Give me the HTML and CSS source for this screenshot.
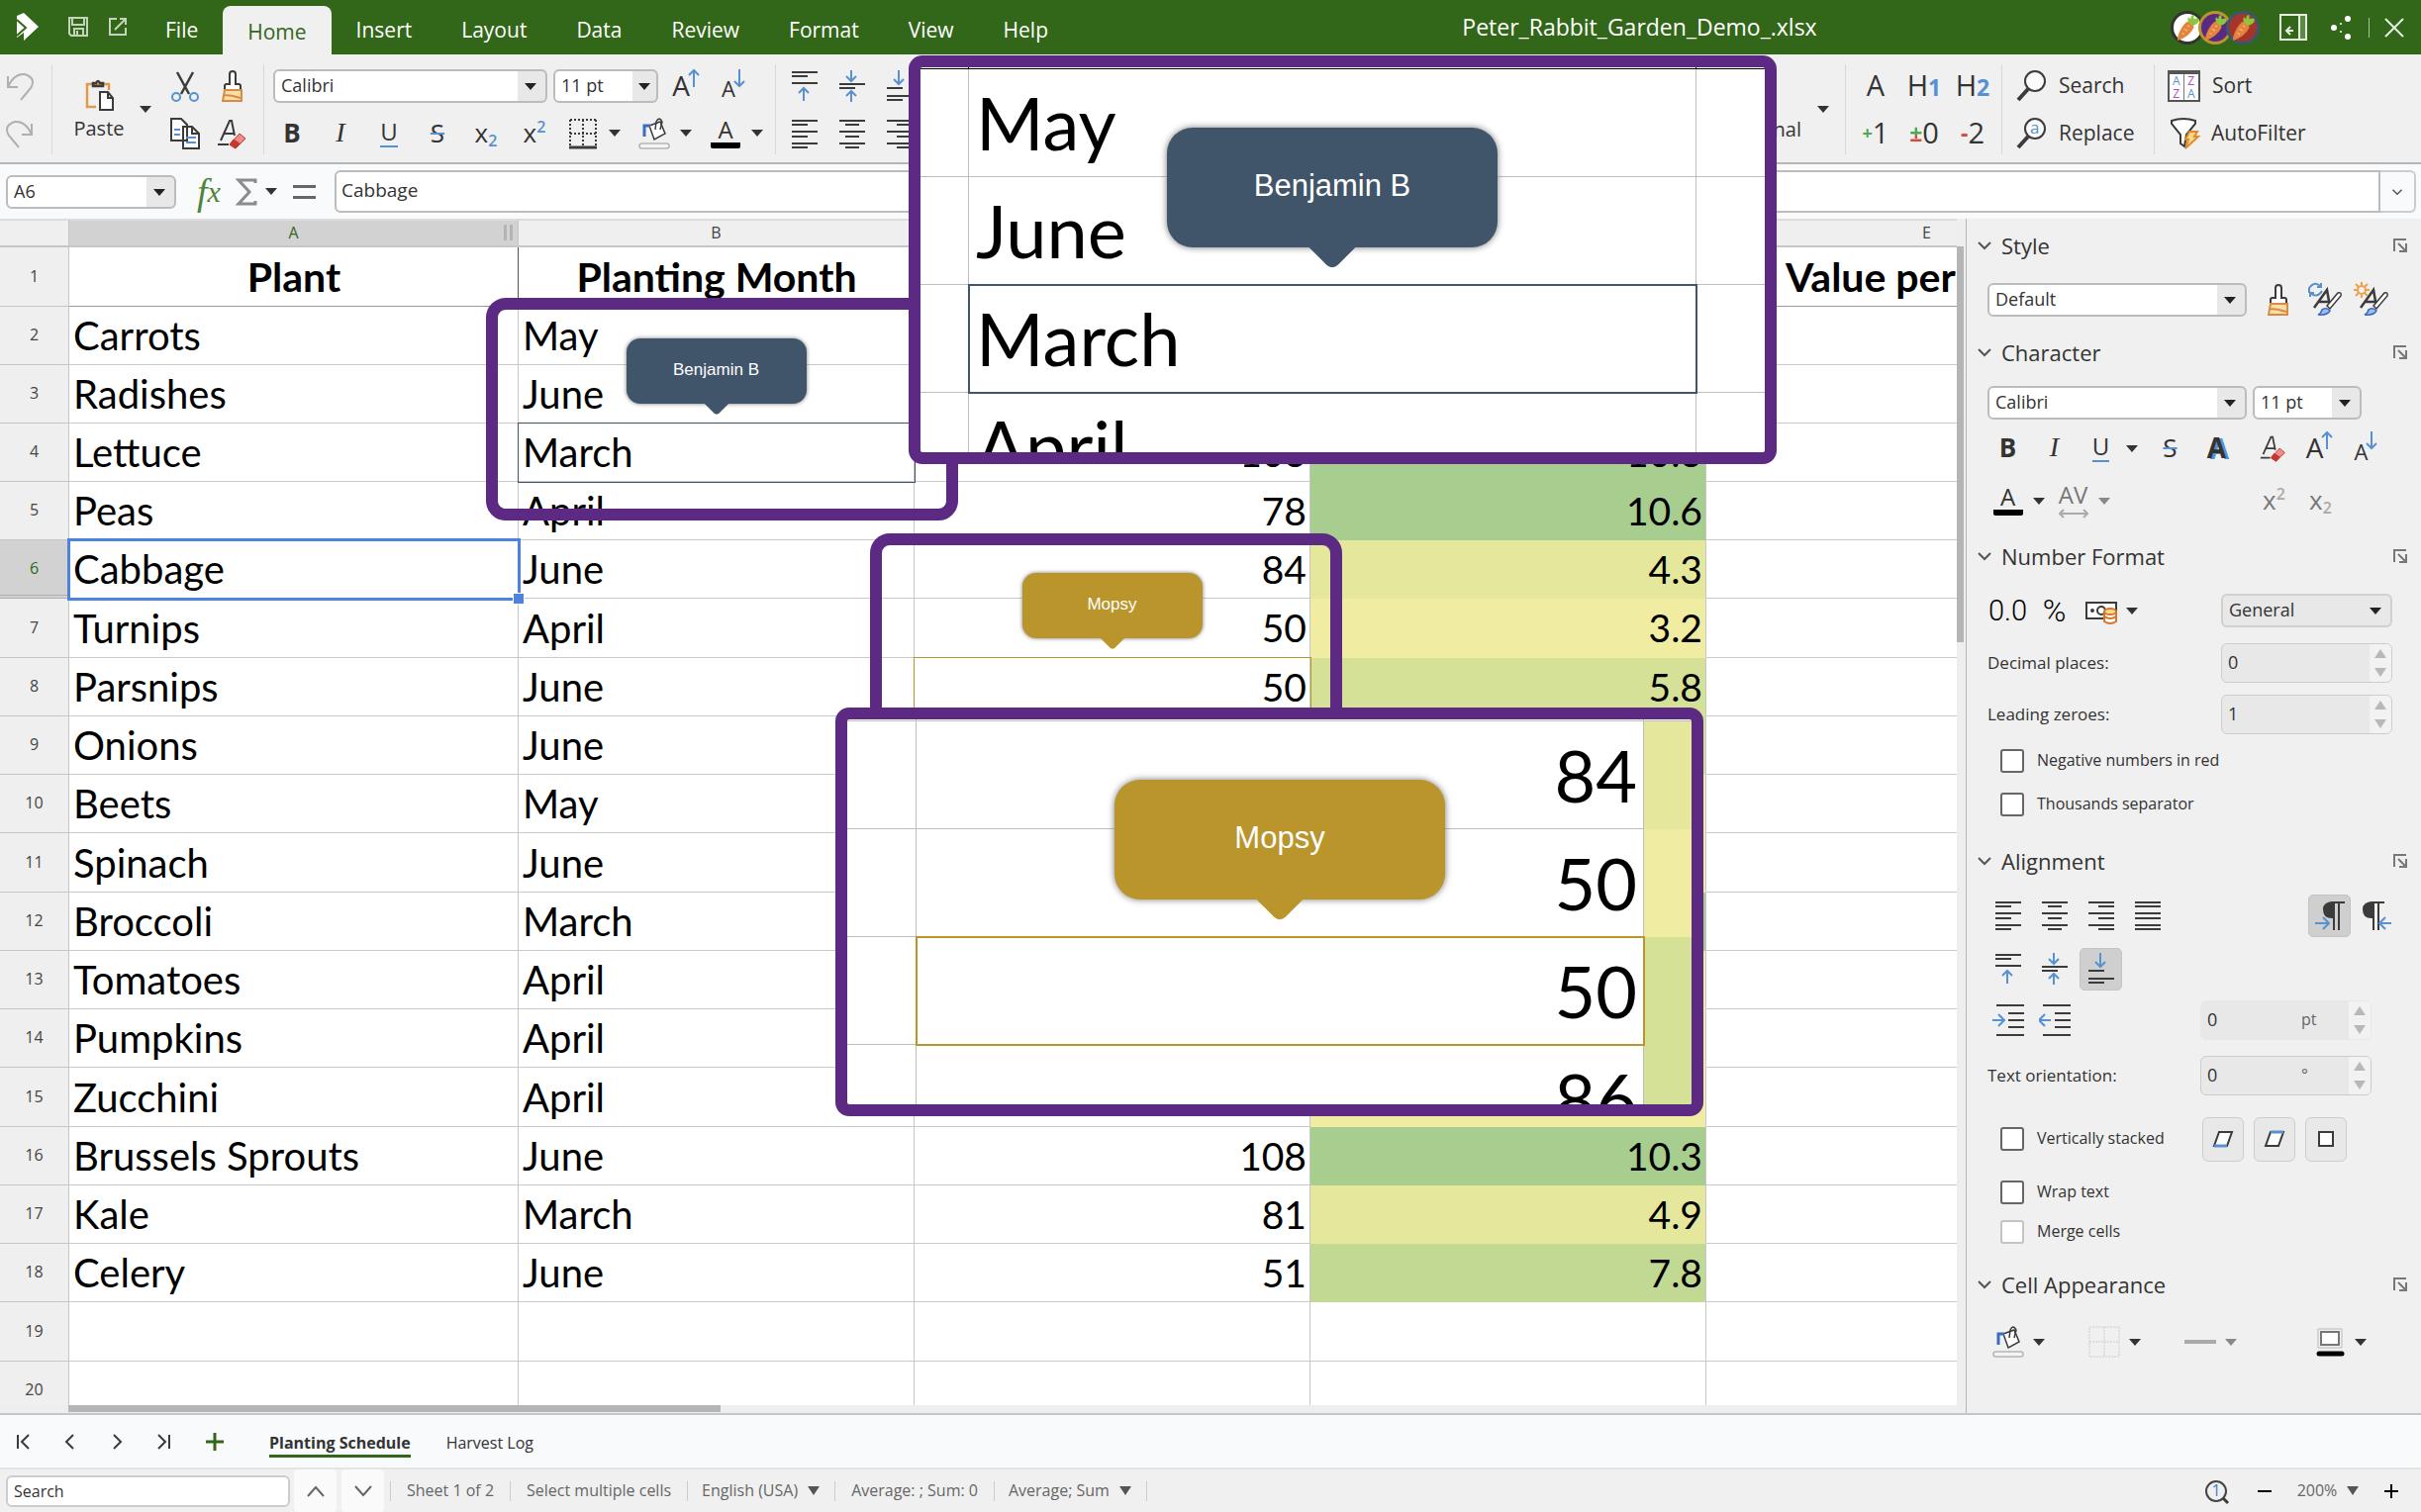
FILE: index.html
```html
<!DOCTYPE html>
<html lang="en">
<head>
<meta charset="utf-8">
<title>Peter_Rabbit_Garden_Demo_.xlsx</title>
<link rel="stylesheet" href="styles.css">
</head>
<body>
<svg class="sprite" aria-hidden="true">
  <symbol id="left" viewBox="0 0 32 32"><path d="M3 3h26M3 14h26M3 26h26M3 7h16M3 19h16M3 30h16"/></symbol>
  <symbol id="center" viewBox="0 0 32 32"><path d="M3 3h26M3 14h26M3 26h26M9 7h14M9 19h14M9 30h14"/></symbol>
  <symbol id="right" viewBox="0 0 32 32"><path d="M3 3h26M3 14h26M3 26h26M13 7h16M13 19h16M13 30h16"/></symbol>
  <symbol id="justify" viewBox="0 0 32 32"><path d="M3 3h26M3 14h26M3 26h26M3 7h26M3 19h26M3 30h26"/></symbol>
  <symbol id="vtop" viewBox="0 0 32 32"><path d="M3 2h26M3 6h16M3 13h26"/><path class="blue" d="M15 31V18M10 23l5-5 5 5"/></symbol>
  <symbol id="vmid" viewBox="0 0 32 32"><path d="M3 14h26M3 18h16"/><path class="blue" d="M15 0v11M10 6l5 5 5-5M15 32V21M10 26l5-5 5 5"/></symbol>
  <symbol id="vbot" viewBox="0 0 32 32"><path d="M3 18h16M3 26h26M3 30h16"/><path class="blue" d="M15 0v14M10 9l5 5 5-5"/></symbol>
  <symbol id="indent" viewBox="0 0 32 32"><path d="M4 1h28M16 9h16M16 16h16M16 23h16M4 31h28"/><path class="blue" d="M0 16h12M6 10l6 6-6 6"/></symbol>
  <symbol id="outdent" viewBox="0 0 32 32"><path d="M4 1h28M16 9h16M16 16h16M16 23h16M4 31h28"/><path class="blue" d="M0 16h12M6 10l-6 6 6 6"/></symbol>
  <symbol id="brush" viewBox="0 0 32 32"><path fill="#fff" d="M8 20v-4q0-2 2-2h3V4q0-3 3-3t3 3v10h3q2 0 2 2v4z"/><path fill="#f6dfa4" stroke="#d98b45" d="M8 20h17v11H6zM7 25q8 0 17 3"/></symbol>
  <symbol id="eraser" viewBox="0 0 32 32"><path d="M4 23L13 3h2l3 15M8 16h9" stroke-width="2"/><path d="M1 27h11"/><path fill="#e98d8d" stroke="#c8372d" stroke-width="1" d="M13 27l10-11 6 5-10 10z"/><path fill="#c8372d" stroke="#c8372d" stroke-width="1" d="M13 27l4-5 6 4-4 5z"/></symbol>
  <symbol id="bucket" viewBox="0 0 32 32"><path fill="#fff" stroke-width="1.500" d="M11 8l11-4 5 12-11 6z"/><path stroke-width="1.500" d="M17 12l1-8q3-6 6 0l-2 8"/><path stroke="#3c6cc0" stroke-width="3" d="M6 19V8h6"/><rect x="1" y="26" width="30" height="5" rx="2.500" fill="#f4f4f4" stroke="#b5b5b5" stroke-width="1.500"/></symbol>
  <symbol id="launch" viewBox="0 0 16 16"><path stroke="#777" d="M2 14V2h12M14 6v8H7M6 6l8 8"/></symbol>
  <symbol id="chev" viewBox="0 0 16 16"><path stroke="#555" d="M2 5l6 6 6-6"/></symbol>
  <symbol id="lens" viewBox="0 0 32 32"><circle cx="20" cy="11" r="10" fill="#fcfcfc"/><path d="M13 19L3 30" stroke-width="4"/></symbol>
  <symbol id="carrot" viewBox="0 0 24 24"><path fill="#e4833c" stroke="none" d="M13 6q5 1 5 6-4 8-15 12-1-2 2-9 4-8 8-9z"/><path stroke="#f7c08c" stroke-width="1" d="M9 13l3 2M7 17l2 1M12 10l2 1"/><path fill="#8cc63a" stroke="none" d="M15 9q-4-4-2-7l2 2q0-4 3-4v4q5-2 5 1-1 4-7 5z"/></symbol>
  <symbol id="newA" viewBox="0 0 36 36"><path d="M7 26L20 8l3 17M11 20h11" stroke-width="2.500"/><path fill="#fff" stroke-width="1.500" d="M20 24L31 11q4-1 3 3L23 27z"/><path fill="#9fc0ee" stroke="#3c6cc0" stroke-width="1.500" d="M11 33q3-1 4-5 5-3 8 1-3 5-12 4z"/></symbol>
</svg>

<div class="app">
  <header class="titlebar">
    <svg class="logo" viewBox="0 0 22 28" aria-label="Logo"><path fill="#fff" d="M7 0l15 14L7 28V20L0 25V3z"/><path fill="none" stroke="#326618" stroke-width="2" d="M0 7l9 8-9 8"/></svg>
    <button class="tb" aria-label="Save"><svg class="i20 pale thin" viewBox="0 0 20 20"><path d="M1 1h18v18H3l-2-2zM4 1v7h12V1M6 19v-7h9v7M9 14v5"/></svg></button>
    <button class="tb" aria-label="Open in new window"><svg class="i20 pale thin" viewBox="0 0 20 20"><path d="M9 2H2v16h16v-7M12 2h6v6M18 2L7 13"/></svg></button>
    <nav class="tabs">
      <a href="#">File</a><a href="#" class="on">Home</a><a href="#">Insert</a><a href="#">Layout</a><a href="#">Data</a><a href="#">Review</a><a href="#">Format</a><a href="#">View</a><a href="#">Help</a>
    </nav>
    <h1 class="filename">Peter_Rabbit_Garden_Demo_.xlsx</h1>
    <div class="tools">
      <div class="people"><span class="av a1"><svg><use href="#carrot"/></svg></span><span class="av a2"><svg><use href="#carrot"/></svg></span><span class="av a3"><svg><use href="#carrot"/></svg></span></div>
      <button class="tb" aria-label="Sidebar"><svg class="i28 pale" viewBox="0 0 28 28"><path d="M1 1h26v25H1zM20 1v25M14 17H8M11 13l-4 4 4 4"/><path fill="#5c8a45" d="M20 1h7v25h-7z"/></svg></button>
      <button class="tb" aria-label="Share"><svg class="i20 dots" viewBox="0 0 20 24"><circle cx="3" cy="12" r="3"/><circle cx="17" cy="3" r="3"/><circle cx="17" cy="21" r="3"/><circle cx="10" cy="8" r="1"/><circle cx="10" cy="16" r="1"/></svg></button>
      <i class="tsep"></i>
      <button class="tb" aria-label="Close"><svg class="i20 pale" viewBox="0 0 20 20"><path d="M1 1l18 18M19 1L1 19"/></svg></button>
    </div>
  </header>

  <section class="ribbon" aria-label="Home tools">
    <div class="group g-undo">
      <button class="ib" aria-label="Undo"><svg class="i28 faint" viewBox="0 0 28 28"><path d="M2 4v11h10M2 15Q8 1 19 2q12 4 6 14l-10 12"/></svg></button>
      <button class="ib" aria-label="Redo"><svg class="i28 faint" viewBox="0 0 28 28"><path d="M26 4v11H16M26 15Q20 1 9 2q-12 4-6 14l10 12"/></svg></button>
    </div>
    <div class="group g-clip">
      <button class="paste"><svg class="i32" viewBox="0 0 32 32"><path stroke="#e09a4a" d="M13 28H4V5h22v6" stroke-width="2.500"/><path d="M10 7V4h3q2-4 4 0h3v3z" stroke-width="2.500"/><path fill="#fff" d="M17 13h8l5 6v12H17zM25 13v6h5"/></svg><span>Paste</span></button>
      <span class="arr"></span>
      <div class="pad2">
        <button class="ib" aria-label="Cut"><svg class="i32" viewBox="0 0 32 32"><path d="M8 2l12 22M24 2L12 24" stroke-width="2.500"/><g class="blue"><circle cx="7" cy="27" r="4"/><circle cx="25" cy="27" r="4"/></g></svg></button>
        <button class="ib" aria-label="Format painter"><svg class="i32"><use href="#brush"/></svg></button>
        <button class="ib" aria-label="Copy"><svg class="i32" viewBox="0 0 32 32"><path fill="#fff" d="M2 1h10l6 6v16H2zM14 9h9l7 7v15H14zM23 9v7h7"/><path class="blue" d="M5 12h6M5 17h6M17 20h10M17 25h10"/></svg></button>
        <button class="ib" aria-label="Clear formatting"><svg class="i32"><use href="#eraser"/></svg></button>
      </div>
    </div>
    <div class="group g-font">
      <div class="line">
        <span class="combo fam"><select aria-label="Font"><option>Calibri</option></select></span>
        <span class="combo siz"><select aria-label="Font size"><option>11 pt</option></select></span>
        <button class="ib grow" aria-label="Increase size"><span class="lt">A</span><svg class="ar" viewBox="0 0 12 18"><path class="blue" d="M6 18V1M1 6l5-5 5 5"/></svg></button>
        <button class="ib grow small" aria-label="Decrease size"><span class="lt">A</span><svg class="ar" viewBox="0 0 12 18"><path class="blue" d="M6 0v17M1 12l5 5 5-5"/></svg></button>
      </div>
      <div class="line">
        <div class="chars"><button class="ib ch"><b>B</b></button><button class="ib ch"><i class="ser">I</i></button><button class="ib ch"><span class="un">U</span></button><button class="ib ch"><span class="st">S</span></button><button class="ib ch"><span>x<sub>2</sub></span></button><button class="ib ch"><span>x<sup>2</sup></span></button></div>
        <div class="splits">
          <div><button class="ib" aria-label="Borders"><svg class="i32" viewBox="0 0 32 32"><path d="M3 2h26M3 2v26M29 2v26M16 2v26M3 16h26" stroke-dasharray="2 2"/><path d="M2 30h28" stroke-width="3"/></svg></button><span class="arr"></span></div>
          <div><button class="ib" aria-label="Fill colour"><svg class="i32"><use href="#bucket"/></svg></button><span class="arr"></span></div>
          <div><button class="ib ch"><span class="bar">A</span></button><span class="arr"></span></div>
        </div>
      </div>
    </div>
    <div class="group g-align">
      <div class="pad3">
        <button class="ib" aria-label="Top"><svg class="i32"><use href="#vtop"/></svg></button><button class="ib" aria-label="Middle"><svg class="i32"><use href="#vmid"/></svg></button><button class="ib" aria-label="Bottom"><svg class="i32"><use href="#vbot"/></svg></button>
        <button class="ib" aria-label="Left"><svg class="i32"><use href="#left"/></svg></button><button class="ib" aria-label="Centre"><svg class="i32"><use href="#center"/></svg></button><button class="ib" aria-label="Right"><svg class="i32"><use href="#right"/></svg></button>
      </div>
      <button class="cond">Conditional</button><span class="arr"></span>
    </div>
    <div class="group g-style">
      <div class="pad3">
        <button class="ib big">A</button><button class="ib big">H<b class="b">1</b></button><button class="ib big">H<b class="b">2</b></button>
        <button class="ib big"><b class="g">+</b>1</button><button class="ib big"><b class="pm">±</b>0</button><button class="ib big"><b class="r">-</b>2</button>
      </div>
    </div>
    <div class="group g-find">
      <button class="wide"><svg class="i32"><use href="#lens"/></svg>Search</button>
      <button class="wide"><span class="rep"><svg class="i32"><use href="#lens"/></svg><em>a</em></span>Replace</button>
    </div>
    <div class="group g-sort">
      <button class="wide"><span class="az"><span>A</span><span>Z</span><span>Z</span><span>A</span></span>Sort</button>
      <button class="wide"><svg class="i32" viewBox="0 0 32 32"><path fill="#fff" d="M4 3q12-4 24 0v3L19 17l-2 12-4-3V17L4 6z"/><path fill="#f8d98a" stroke="#e08a2e" d="M22 14h8l-3 5h4L18 31l3-9h-3z"/></svg>AutoFilter</button>
    </div>
  </section>

  <section class="formula" aria-label="Formula bar">
    <span class="combo name"><select aria-label="Name box"><option>A6</option></select></span>
    <button class="fx">f<sub>x</sub></button>
    <button class="sum" aria-label="Sum"><svg class="i32" viewBox="0 0 32 32"><path stroke="#8b8b8b" stroke-width="3" d="M24 7V4H7l11 12L7 28h17v-3"/></svg></button><span class="arr"></span>
    <button class="eq" aria-label="Equals"><i></i><i></i></button>
    <input class="finput" aria-label="Formula" value="Cabbage">
    <button class="fdrop" aria-label="Expand"><svg class="i12"><use href="#chev"/></svg></button>
  </section>

  <main class="work">
    <div class="grid">
      <div class="view">
        <table>
          <colgroup><col class="c0"><col class="ca"><col class="cb"><col class="cb"><col class="cb"><col class="ce"></colgroup>
          <thead><tr><th></th><th class="cur">A<i class="grip"></i></th><th>B</th><th>C</th><th>D</th><th>E</th></tr></thead>
          <tbody>
            <tr class="head"><th>1</th><td>Plant</td><td>Planting Month</td><td></td><td></td><td class="cut">Value per</td></tr>
            <tr><th>2</th><td>Carrots</td><td>May</td><td></td><td></td><td></td></tr>
            <tr><th>3</th><td>Radishes</td><td>June</td><td></td><td></td><td></td></tr>
            <tr><th>4</th><td>Lettuce</td><td class="peer slate">March<span class="tip">Benjamin B</span></td><td>103</td><td class="s1">10.3</td><td></td></tr>
            <tr><th>5</th><td>Peas</td><td>April</td><td>78</td><td class="s1">10.6</td><td></td></tr>
            <tr class="now"><th>6</th><td class="sel">Cabbage</td><td>June</td><td>84</td><td class="s4">4.3</td><td></td></tr>
            <tr><th>7</th><td>Turnips</td><td>April</td><td>50</td><td class="s5">3.2</td><td></td></tr>
            <tr><th>8</th><td>Parsnips</td><td>June</td><td class="peer gold">50<span class="tip">Mopsy</span></td><td class="s3">5.8</td><td></td></tr>
            <tr><th>9</th><td>Onions</td><td>June</td><td></td><td class="s3"></td><td></td></tr>
            <tr><th>10</th><td>Beets</td><td>May</td><td></td><td class="s5"></td><td></td></tr>
            <tr><th>11</th><td>Spinach</td><td>June</td><td></td><td class="s5"></td><td></td></tr>
            <tr><th>12</th><td>Broccoli</td><td>March</td><td></td><td class="s1"></td><td></td></tr>
            <tr><th>13</th><td>Tomatoes</td><td>April</td><td></td><td class="s5"></td><td></td></tr>
            <tr><th>14</th><td>Pumpkins</td><td>April</td><td></td><td class="s5"></td><td></td></tr>
            <tr><th>15</th><td>Zucchini</td><td>April</td><td></td><td class="s5"></td><td></td></tr>
            <tr><th>16</th><td>Brussels Sprouts</td><td>June</td><td>108</td><td class="s1">10.3</td><td></td></tr>
            <tr><th>17</th><td>Kale</td><td>March</td><td>81</td><td class="s4">4.9</td><td></td></tr>
            <tr><th>18</th><td>Celery</td><td>June</td><td>51</td><td class="s2">7.8</td><td></td></tr>
            <tr><th>19</th><td></td><td></td><td></td><td></td><td></td></tr>
            <tr><th>20</th><td></td><td></td><td></td><td></td><td></td></tr>
          </tbody>
        </table>
      </div>
      <div class="vbar"><i></i></div>
      <div class="hbar"><i></i></div>
    </div>

    <aside class="side" aria-label="Properties">
      <h2><svg class="i16"><use href="#chev"/></svg>Style<svg class="i16 lau"><use href="#launch"/></svg></h2>
      <div class="row h52 inset">
        <span class="combo sfam"><select aria-label="Style"><option>Default</option></select></span>
        <button class="sb first" aria-label="Apply style"><svg class="i32"><use href="#brush"/></svg></button>
        <button class="sb" aria-label="Update style"><svg class="i36" viewBox="0 0 36 36"><use href="#newA"/><path class="blue" d="M2 11V6q6-8 12-1M14 1v4h-4M15 9q-5 8-12 2M3 15v-4h4"/></svg></button>
        <button class="sb" aria-label="New style"><svg class="i36" viewBox="0 0 36 36"><use href="#newA"/><g stroke="#eea04a"><circle cx="8" cy="8" r="4"/><path d="M8 0v3M8 13v3M0 8h3M13 8h3M2 2l3 3M11 11l3 3M14 2l-3 3M2 14l3-3"/></g></svg></button>
      </div>
      <h2><svg class="i16"><use href="#chev"/></svg>Character<svg class="i16 lau"><use href="#launch"/></svg></h2>
      <div class="row h44 inset">
        <span class="combo sfam"><select aria-label="Font family"><option>Calibri</option></select></span>
        <span class="combo ssiz"><select aria-label="Font height"><option>11 pt</option></select></span>
      </div>
      <div class="row h48">
        <button class="sb ch"><b>B</b></button><button class="sb ch"><i class="ser">I</i></button><button class="sb ch"><span class="un">U</span></button><span class="arr"></span>
        <button class="sb ch m7"><span class="st">S</span></button><button class="sb ch"><b class="shadow">A</b></button>
        <button class="sb m10" aria-label="Clear"><svg class="i28"><use href="#eraser"/></svg></button>
        <button class="sb grow" aria-label="Larger"><span class="lt">A</span><svg class="ar" viewBox="0 0 12 18"><path class="blue" d="M6 18V1M1 6l5-5 5 5"/></svg></button>
        <button class="sb grow small" aria-label="Smaller"><span class="lt">A</span><svg class="ar" viewBox="0 0 12 18"><path class="blue" d="M6 0v17M1 12l5 5 5-5"/></svg></button>
      </div>
      <div class="row h58">
        <button class="sb ch"><span class="bar">A</span></button><span class="arr"></span>
        <button class="sb ch m3 dim av-sp"><span>AV</span><svg viewBox="0 0 30 10"><path stroke="#aaa" d="M1 5h28M5 1L1 5l4 4M25 1l4 4-4 4"/></svg></button><span class="arr dim"></span>
        <button class="sb ch m140 dim"><span>x<sup>2</sup></span></button><button class="sb ch dim"><span>x<sub>2</sub></span></button>
      </div>
      <h2><svg class="i16"><use href="#chev"/></svg>Number Format<svg class="i16 lau"><use href="#launch"/></svg></h2>
      <div class="row h52">
        <button class="sb nf dec">0.0</button><button class="sb nf">%</button>
        <button class="sb" aria-label="Currency"><svg class="i32" viewBox="0 0 32 32"><path fill="#fff" d="M1 8h30v16H1z"/><circle cx="16" cy="16" r="4"/><circle cx="7" cy="16" r="1"/><g fill="#fff" stroke="#d2782a"><path d="M19 17v10q6 4 12 0V17"/><path d="M19 22q6 4 12 0"/><ellipse cx="25" cy="17" rx="6" ry="3" fill="#f6d98e"/></g></svg></button><span class="arr"></span>
        <span class="combo plain"><select aria-label="Number format"><option>General</option></select></span>
      </div>
      <div class="row h54 inset"><label for="dp">Decimal places:</label><span class="spin"><input id="dp" value="0"><span class="ud"><button class="up" aria-label="More"></button><button class="dn" aria-label="Less"></button></span></span></div>
      <div class="row h50 inset"><label for="lz">Leading zeroes:</label><span class="spin"><input id="lz" value="1"><span class="ud"><button class="up" aria-label="More"></button><button class="dn" aria-label="Less"></button></span></span></div>
      <label class="row h44 chk"><input type="checkbox">Negative numbers in red</label>
      <label class="row h44 chk"><input type="checkbox">Thousands separator</label>
      <h2 class="gap"><svg class="i16"><use href="#chev"/></svg>Alignment<svg class="i16 lau"><use href="#launch"/></svg></h2>
      <div class="row h52">
        <button class="sb" aria-label="Left"><svg class="i32"><use href="#left"/></svg></button><button class="sb" aria-label="Centre"><svg class="i32"><use href="#center"/></svg></button><button class="sb" aria-label="Right"><svg class="i32"><use href="#right"/></svg></button><button class="sb" aria-label="Justify"><svg class="i32"><use href="#justify"/></svg></button>
        <button class="sb on ltr" aria-label="Left to right"><svg class="i32" viewBox="0 0 32 32"><path fill="#3b3b3b" stroke="none" d="M20 2v17q-11 1-11-9 0-8 11-8z"/><path d="M17 3h14M20 3v28M25 3v28"/><path class="blue" d="M1 24h13M9 18l6 6-6 6"/></svg></button>
        <button class="sb" aria-label="Right to left"><svg class="i32" viewBox="0 0 32 32"><path fill="#3b3b3b" stroke="none" d="M13 2v17Q2 20 2 10q0-8 11-8z"/><path d="M10 3h14M13 3v28M18 3v28"/><path class="blue" d="M31 24H19M25 18l-6 6 6 6"/></svg></button>
      </div>
      <div class="row h56">
        <button class="sb" aria-label="Top"><svg class="i32"><use href="#vtop"/></svg></button><button class="sb" aria-label="Middle"><svg class="i32"><use href="#vmid"/></svg></button><button class="sb on" aria-label="Bottom"><svg class="i32"><use href="#vbot"/></svg></button>
      </div>
      <div class="row h48">
        <button class="sb" aria-label="Indent"><svg class="i32"><use href="#indent"/></svg></button><button class="sb" aria-label="Outdent"><svg class="i32"><use href="#outdent"/></svg></button>
        <span class="spin mid bare"><input aria-label="Indent amount" value="0"><em>pt</em><span class="ud"><button class="up" aria-label="More"></button><button class="dn" aria-label="Less"></button></span></span>
      </div>
      <div class="row h64 inset"><label for="to">Text orientation:</label><span class="spin mid"><input id="to" value="0"><em>°</em><span class="ud"><button class="up" aria-label="More"></button><button class="dn" aria-label="Less"></button></span></span></div>
      <div class="row h64">
        <label class="chk"><input type="checkbox">Vertically stacked</label>
        <span class="trio">
          <button aria-label="Lower edge"><svg class="i20" viewBox="0 0 20 20"><path fill="#fff" d="M6 3h13l-5 14H1z"/><path class="blue" stroke-width="3" d="M1 17h13"/></svg></button>
          <button aria-label="Upper edge"><svg class="i20" viewBox="0 0 20 20"><path fill="#fff" d="M6 3h13l-5 14H1z"/><path class="blue" stroke-width="3" d="M6 3h13"/></svg></button>
          <button aria-label="Inside"><svg class="i20" viewBox="0 0 20 20"><path fill="#fff" d="M3 3h14v14H3z"/></svg></button>
        </span>
      </div>
      <label class="row h44 chk"><input type="checkbox">Wrap text</label>
      <label class="row h36 chk"><input type="checkbox" class="off">Merge cells</label>
      <h2 class="gap"><svg class="i16"><use href="#chev"/></svg>Cell Appearance<svg class="i16 lau"><use href="#launch"/></svg></h2>
      <div class="row h58">
        <button class="sb" aria-label="Fill"><svg class="i32"><use href="#bucket"/></svg></button><span class="arr"></span>
        <button class="sb m34" aria-label="Borders"><svg class="i32" viewBox="0 0 32 32"><path stroke="#ccc" stroke-width="1" stroke-dasharray="2 1" d="M1 1h30v30H1zM16 1v30M1 16h30"/></svg></button><span class="arr"></span>
        <button class="sb m34" aria-label="Line style"><svg class="i32" viewBox="0 0 32 32"><path stroke="#aaa" stroke-width="4" d="M0 16h32"/></svg></button><span class="arr dim"></span>
        <button class="sb m67" aria-label="Line colour"><svg class="i32" viewBox="0 0 32 32"><path stroke="#b5bcc2" stroke-width="1" d="M4 3h24v19H4z"/><path stroke="#777" fill="#fff" d="M7 6h18v13H7z"/><path stroke="#000" stroke-width="5" stroke-linecap="round" d="M5 28h23"/></svg></button><span class="arr"></span>
      </div>
    </aside>

  </main>

  <nav class="sheets" aria-label="Sheets">
    <button aria-label="First"><svg class="i16" viewBox="0 0 16 16"><path d="M2 1v14M13 1L6 8l7 7"/></svg></button>
    <button aria-label="Previous"><svg class="i16" viewBox="0 0 16 16"><path d="M11 1L4 8l7 7"/></svg></button>
    <button aria-label="Next"><svg class="i16" viewBox="0 0 16 16"><path d="M5 1l7 7-7 7"/></svg></button>
    <button aria-label="Last"><svg class="i16" viewBox="0 0 16 16"><path d="M14 1v14M3 1l7 7-7 7"/></svg></button>
    <button class="add" aria-label="Add sheet"><svg class="i20" viewBox="0 0 20 20"><path stroke="#326618" stroke-width="3" d="M10 1v18M1 10h18"/></svg></button>
    <a href="#" class="on">Planting Schedule</a><a href="#">Harvest Log</a>
  </nav>

  <footer class="status">
    <input class="find" aria-label="Search" value="Search">
    <button class="sq" aria-label="Previous match"><svg class="i20" viewBox="0 0 20 20"><path stroke="#666" d="M2 15l8-9 8 9"/></svg></button>
    <button class="sq" aria-label="Next match"><svg class="i20" viewBox="0 0 20 20"><path stroke="#666" d="M2 5l8 9 8-9"/></svg></button>
    <span class="s">Sheet 1 of 2</span><span class="s">Select multiple cells</span><button class="s">English (USA)<i></i></button><span class="s w">Average: ; Sum: 0</span><button class="s">Average; Sum<i></i></button><span class="s"></span>
    <div class="zoom">
      <button class="one" aria-label="Zoom to 100%">1<svg viewBox="0 0 6 6"><path d="M0 0l5 5" stroke-width="3"/></svg></button>
      <button aria-label="Zoom out"><svg class="i16" viewBox="0 0 16 16"><path stroke="#000" d="M1 8h14"/></svg></button>
      <button class="pct">200%<i></i></button>
      <button aria-label="Zoom in"><svg class="i16" viewBox="0 0 16 16"><path stroke="#000" d="M1 8h14M8 1v14"/></svg></button>
    </div>
  </footer>

  <div class="frame f1"></div>
  <div class="frame f2"></div>
  <figure class="zoomed z1">
    <div class="zrow lead"><span></span><span></span><span></span></div>
    <div class="zrow"><span></span><span>May</span><span></span></div>
    <div class="zrow"><span></span><span>June</span><span></span></div>
    <div class="zrow"><span></span><span class="peer slate">March<span class="tip">Benjamin B</span></span><span></span></div>
    <div class="zrow"><span></span><span>April</span><span></span></div>
  </figure>
  <figure class="zoomed z2">
    <div class="zrow lead"><span></span><span></span><span></span></div>
    <div class="zrow"><span></span><span>84</span><span class="s4"></span></div>
    <div class="zrow"><span></span><span>50</span><span class="s5"></span></div>
    <div class="zrow"><span></span><span class="peer gold">50<span class="tip">Mopsy</span></span><span class="s3"></span></div>
    <div class="zrow"><span></span><span>86</span><span class="s3"></span></div>
  </figure>
</div>
</body>
</html>
```
FILE: styles.css
```css
* { box-sizing: border-box; }
body { margin: 0; font: 16px/1.2 "Open Sans", "Noto Sans", sans-serif; color: #333; background: #f0f0f0; }
button, input, select { font: inherit; color: inherit; margin: 0; padding: 0; border: 0; background: none; }
button { display: flex; align-items: center; justify-content: center; flex: none; }
a { color: inherit; text-decoration: none; }
svg { fill: none; stroke: #3b3b3b; stroke-width: 2; flex: none; overflow: visible; }
.sprite { position: absolute; width: 0; height: 0; }
.blue { stroke: #5791d2; }
.i12 { width: 12px; height: 12px; }
.i16 { width: 16px; height: 16px; }
.i20 { width: 20px; height: 20px; stroke-width: 2; }
.i28 { width: 28px; height: 28px; }
.i32 { width: 32px; height: 32px; }
.i36 { width: 36px; height: 36px; }
.pale { stroke: #e6eee2; }
.thin { stroke: #c4d4bb; }
.dots { fill: #fff; stroke: none; height: 24px; }
.faint { stroke: #b0b0b0; }
.app { position: relative; min-height: 100vh; height: 100vh; display: flex; flex-direction: column; overflow: hidden; }

/* title bar */
.titlebar { height: 55px; flex: none; background: #326618; color: #fff; display: flex; align-items: stretch; padding-left: 17px; font-size: 21px; }
.logo { width: 22px; height: 28px; margin: 13px 20px 0 0; stroke: none; }
.tb { width: 40px; height: 54px; }
.tabs { display: flex; align-items: flex-end; margin-left: 3px; }
.tabs a { height: 49px; line-height: 49px; padding: 0 25px; }
.tabs .on { background: #f0f0f0; color: #326618; border-radius: 8px 8px 0 0; line-height: 52px; }
.filename { flex: 1; margin: 0; padding-left: 36px; font-size: 23px; font-weight: 400; line-height: 54px; text-align: center; }
.tools { display: flex; align-items: center; padding-right: 6px; }
.people { display: flex; padding: 0 16px 0 0; }
.av { width: 34px; height: 34px; border: 3px solid; border-radius: 50%; margin-right: -6px; display: grid; place-items: center; }
.av svg { width: 26px; height: 26px; }
.a1 { background: #fff; border-color: #333; }
.a2 { background: #5a2a82; border-color: #b9952c; }
.a3 { background: #a5352b; border-color: #41556a; }
.tools .tb { width: 48px; }
.tsep { width: 1px; height: 20px; background: #a7bf9b; margin: 0 4px; }
.tools .tb:last-child { width: 42px; }

/* ribbon */
.ribbon { height: 111px; flex: none; display: flex; border-bottom: 2px solid #b4b6b8; background: #f0f0f0; padding-top: 10px; }
.group { height: 91px; display: flex; align-items: center; border-right: 1px solid #d9d9d9; flex: none; }
.ib { width: 48px; height: 48px; }
.arr { width: 16px; height: 16px; flex: none; display: grid; place-items: center; }
.arr::before { content: ""; border: 6px solid transparent; border-top: 7px solid #333; border-bottom: 0; }
.arr.dim::before { border-top-color: #888; }
.g-undo { width: 53px; flex-direction: column; padding-right: 12px; justify-content: center; }
.g-clip { width: 214px; padding-left: 15px; }
.paste { width: 64px; flex-direction: column; gap: 6px; font-size: 20px; }
.g-clip > .arr { margin-left: 7px; }
.pad2 { display: grid; grid-template-columns: 48px 48px; margin-left: 8px; }
.g-font { width: 517px; flex-direction: column; align-items: flex-start; padding-left: 3px; justify-content: center; }
.line { display: flex; align-items: center; height: 48px; }
.chars { display: grid; grid-template-columns: repeat(6, 49px); padding-left: 1px; }
.splits { display: flex; gap: 8px; }
.splits div { display: flex; align-items: center; }
.combo { position: relative; height: 34px; display: block; flex: none; background: linear-gradient(#e8e8e8, #e8e8e8) right / 28px 100% no-repeat #fff; border: 2px solid #bcbcbc; border-radius: 6px; overflow: hidden; }
.combo select { appearance: none; width: 100%; height: 100%; padding: 0 28px 0 6px; font-size: 18px; outline: 0; display: block; }
.combo::after { content: ""; position: absolute; right: 9px; top: 12px; border: 6px solid transparent; border-top: 7px solid #222; border-bottom: 0; pointer-events: none; }
.fam { width: 277px; margin: 0 6px; }
.siz { width: 106px; margin-right: 4px; }
.siz.combo { background-size: 24px 100%; }
.siz.combo::after { right: 6px; }
.ch { font-size: 26px; line-height: 30px; padding-bottom: 2px; }
.ch .ser { font-family: "Liberation Serif", serif; font-size: 28px; }
.ch sub, .ch sup { font-size: 16px; font-weight: 600; color: #5791d2; line-height: 0; }
.ch sub { vertical-align: -4px; }
.un { font-size: 24px; line-height: 28px; border-bottom: 2px solid #5791d2; }
.st { text-decoration: line-through 2px #5791d2; }
.bar { font-size: 24px; line-height: 26px; width: 30px; border-bottom: 6px solid #000; border-radius: 2px; text-align: center; }
.grow { align-items: center; font-size: 28px; }
.grow .ar { width: 12px; height: 18px; margin: -16px 0 0 -2px; }
.grow.small { font-size: 22px; }
.grow.small .lt { padding-top: 6px; }
.g-align { flex: 1; padding-left: 5px; }
.pad3 { display: grid; grid-template-columns: repeat(3, 48px); }
.cond { font-size: 20px; margin: 40px 14px 0 auto; }
.g-align > .arr { margin-right: 14px; }
.g-style { width: 158px; padding-left: 6px; }
.g-style .pad3 { grid-template-columns: repeat(3, 49px); }
.big { font-size: 29px; }
.big b { font-size: 23px; }
.b { color: #5791d2; align-self: center; padding-top: 5px; }
.g { color: #53a653; }
.r { color: #d9483b; }
.big b.g { font-size: 18px; }
.big .pm { background: linear-gradient(#53a653 60%, #d9483b 60%); background-clip: text; color: transparent; }
.g-find { width: 154px; }
.g-find, .g-sort { flex-direction: column; align-items: flex-start; justify-content: center; padding-left: 13px; }
.g-sort { width: 269px; border: 0; }
.wide { height: 48px; gap: 12px; font-size: 21px; }
.rep { position: relative; display: grid; }
.rep em { position: absolute; left: 15px; top: 0; font-style: normal; font-size: 17px; color: #5791d2; }
.az { width: 33px; height: 32px; border: 2px solid #555; border-top-width: 4px; background: #fff; display: grid; grid-template-columns: 1fr 1fr; grid-template-rows: 13px 13px; font-size: 12px; line-height: 13px; color: #5791d2; }
.az span:nth-child(odd) { border-right: 1px solid #777; }
.az span:nth-child(2), .az span:nth-child(3) { color: #a64fb8; }

/* formula bar */
.formula { height: 55px; flex: none; background: #f8fafc; display: flex; align-items: center; padding: 0 5px 0 6px; }
.name { width: 172px; }
.fx { width: 46px; margin-left: 10px; font: italic 38px "Liberation Serif", serif; color: #4f8438; }
.fx sub { font-size: 30px; line-height: 0; vertical-align: -5px; }
.sum { width: 32px; }
.eq { width: 50px; flex-direction: column; gap: 8px; }
.eq i { width: 23px; height: 3px; background: #666; }
.finput { flex: 1; height: 43px; margin-left: 6px; background: #fff; border: 2px solid #bcbcbc; border-radius: 6px 0 0 6px; padding: 0 6px 4px 5px; font-size: 19px; }
.fdrop { width: 36px; height: 43px; border: 2px solid #ccc; border-left: 0; border-radius: 0 6px 6px 0; }

/* sheet */
.work { flex: 1; min-height: 0; display: flex; border-bottom: 2px solid #c4c6c8; }
.grid { flex: 1; min-width: 0; display: grid; grid-template-columns: 1fr 9px; grid-template-rows: 1fr 8px; background: #eee; border-right: 1px solid #b4b6b8; }
.view { overflow: hidden; min-width: 0; min-height: 0; background: #fff; }
table { table-layout: fixed; width: 2170px; border-collapse: separate; border-spacing: 0; }
.c0 { width: 70px; } .ca { width: 454px; } .cb { width: 400px; } .ce { width: 446px; }
th { background: #efefef; font-weight: 400; font-size: 16px; color: #444; padding: 0; border-right: 1px solid #c6c6c6; border-bottom: 1px solid #c6c6c6; }
thead th { height: 29px; border-top: 2px solid #dcdcdc; border-bottom-width: 2px; position: relative; }
thead .cur, .now th { background: #d2d2d2; color: #326618; }
.now th { border-bottom: 4px double #b0b0b0; padding-top: 3px; }
.grip { position: absolute; right: 5px; top: 4px; width: 9px; height: 16px; border: solid #b4b4b4; border-width: 0 3px; }
td { height: 59px; padding: 0 3px 0 4px; font: 40px/1 Lato, sans-serif; color: #000; white-space: nowrap; border-right: 1px solid #c6c6c6; border-bottom: 1px solid #c9c9c9; }
tr:nth-child(4n + 7) td { height: 60px; }
td:nth-child(4), td:nth-child(5) { text-align: right; font-size: 39px; }
.head td { height: 60px; font-size: 41px; font-weight: 700; text-align: center; border-bottom-color: #999; border-right-color: #555; }
.head td.cut { text-align: left; padding-left: 80px; }
.s1 { background: #a7ce8e; } .s2 { background: #c1d993; } .s3 { background: #d5e197; } .s4 { background: #e5e79d; } .s5 { background: #f0eca1; }
td[class^="s"] { border-bottom-color: transparent; }
td.sel { position: relative; outline: 3px solid #4c83de; outline-offset: -1px; border-bottom-color: #c9c9c9; }
.sel::after { content: ""; position: absolute; right: -7px; bottom: -7px; width: 10px; height: 10px; background: #4c83de; border: 1px solid #fff; }
.peer { position: relative; }
.slate { --c: #41556a; } .gold { --c: #b9952c; }
td.peer { outline: 1px solid var(--c); }
.tip { position: absolute; left: 50%; bottom: 78px; margin-left: -91px; width: 182px; height: 66px; border-radius: 14px; background: var(--c); color: #fff; font: 17px/64px "Liberation Sans", sans-serif; text-align: center; box-shadow: 0 0 4px #777; }
.tip::after { content: ""; position: absolute; left: 50%; bottom: -8px; width: 20px; height: 20px; margin-left: -10px; background: var(--c); transform: rotate(45deg); border-radius: 0 0 4px 0; }
.vbar i { display: block; width: 7px; height: 400px; margin-top: 28px; background: #b4b6b5; }
.hbar { grid-column: 1 / -1; }
.hbar i { display: block; height: 7px; width: 659px; margin-left: 69px; background: #b4b6b5; }

/* callouts laid over the sheet */
.frame, .zoomed { position: absolute; border: 12px solid #5c2a82; }
.frame { width: 477px; height: 225px; border-radius: 20px; }
.f1 { left: 491px; top: 301px; }
.f2 { left: 879px; top: 539px; }
.zoomed { width: 877px; height: 413px; margin: 0; border-radius: 14px; background: #fff; overflow: hidden; }
.z1 { left: 918px; top: 56px; }
.z2 { left: 844px; top: 715px; }
.zrow { display: grid; grid-template-columns: 49px 735px 1fr; height: 109px; font: 74px/108px Lato, sans-serif; color: #000; }
.z2 .zrow { grid-template-columns: 70px 735px 1fr; text-align: right; font-size: 72px; }
.zrow > span { border-right: 1px solid #bdbdbd; border-bottom: 1px solid #bdbdbd; padding: 0 6px 0 7px; }
.zrow > span:last-child { border-right: 0; }
.zrow > [class^="s"] { border-bottom: 0; }
.zrow.lead { height: 2px; }
.z1 .lead > span { border-color: #000; }
.zoomed .peer { outline: 2px solid var(--c); outline-offset: -1px; z-index: 1; }
.zoomed .tip { bottom: 146px; width: 334px; height: 121px; margin-left: -167px; border-radius: 26px; font-size: 31px; line-height: 118px; box-shadow: 0 0 7px #777; }
.zoomed .tip::after { width: 36px; height: 36px; margin-left: -18px; bottom: -16px; border-radius: 0 0 8px 0; }

/* side panel */
.side { width: 459px; flex: none; background: #f0f0f0; overflow: hidden; }
h2 { margin: 0; height: 56px; display: flex; align-items: center; gap: 9px; padding: 0 13px 2px 10px; font-size: 22px; font-weight: 400; }
h2.gap { margin-top: 8px; }
h2 .lau { margin-left: auto; }
.row { display: flex; align-items: center; padding-left: 18px; font-size: 17px; }
.inset { padding-left: 21px; }
.h36 { height: 36px; } .h44 { height: 44px; } .h48 { height: 48px; } .h50 { height: 50px; } .h52 { height: 52px; } .h54 { height: 54px; } .h56 { height: 56px; } .h58 { height: 58px; } .h64 { height: 64px; }
.sb { width: 47px; height: 43px; border-radius: 5px; }
.sb.first { margin-left: 8px; }
.sb.on { background: #cfcfcf; border: 1px solid #c4c4c4; width: 43px; margin: 0 2px; }
.ltr.on { margin-left: 139px; }
.m3 { margin-left: 3px; } .m7 { margin-left: 7px; } .m10 { margin-left: 10px; } .m34 { margin-left: 34px; } .m67 { margin-left: 68px; } .m140 { margin-left: 140px; }
.sfam { width: 262px; }
.ssiz { width: 110px; margin-left: 6px; }
.shadow { text-shadow: 3px 1px #5791d2; font-size: 28px; }
.dim { color: #777; }
.dim sub, .dim sup { color: #aaa; }
.av-sp { flex-direction: column; font-size: 24px; line-height: 28px; }
.av-sp svg { width: 30px; height: 10px; }
.nf { font-family: Roboto, sans-serif; font-weight: 300; font-size: 32px; color: #000; }
.dec { font-size: 29px; }
.plain.combo { width: 173px; margin: 0 29px 0 auto; background: #e8e8e8; border-color: #d0d0d0; }
.spin { width: 173px; height: 40px; margin: 0 29px 0 auto; display: flex; border: 1px solid #ccc; border-radius: 6px; background: #e8e8e8; overflow: hidden; font-size: 18px; }
.spin input { flex: 1; min-width: 0; padding-left: 6px; }
.spin em { width: 56px; font-style: normal; font-size: 16px; align-self: center; color: #666; padding-left: 8px; }
.ud { width: 22px; display: flex; flex-direction: column; justify-content: space-around; align-items: center; background: #f2f2f2; }
.up, .dn { border: 6px solid transparent; }
.up { border-top: 0; border-bottom: 9px solid #b8b8b8; }
.dn { border-bottom: 0; border-top: 9px solid #b8b8b8; }
.spin.mid { margin-right: 50px; }
.bare { border-color: transparent; }
.chk { font-size: 16px; display: flex; align-items: center; gap: 13px; padding-left: 34px; }
.row > .chk { padding-left: 16px; }
.chk input { appearance: none; width: 24px; height: 24px; background: #fff; border: 2px solid #666; border-radius: 3px; }
.chk .off { border-color: #c4c4c4; }
.trio { display: flex; gap: 10px; margin: 0 75px 0 auto; }
.trio button { width: 42px; height: 45px; background: #e8e8e8; border: 1px solid #ccc; border-radius: 6px; }

/* sheet tabs */
.sheets { height: 55px; flex: none; background: #f8fafc; display: flex; align-items: center; border-bottom: 2px solid #e5e4e2; }
.sheets button { width: 47px; height: 40px; }
.sheets .add { width: 58px; }
.sheets a { margin: 6px 0 0 26px; line-height: 22px; padding-bottom: 1px; border-bottom: 3px solid transparent; }
.sheets a + a { margin-left: 36px; }
.sheets .on { font-weight: 700; border-color: #326618; }

/* status bar */
.status { height: 43px; flex: none; display: flex; align-items: center; padding: 0 6px; color: #666; }
.find { width: 287px; height: 32px; background: #fff; border: 2px solid #ccc; border-radius: 6px; padding: 0 6px; color: #333; }
.sq { width: 43px; height: 43px; background: #fafafa; margin-left: 4px; border-radius: 4px; }
.sq + .sq { margin: 0 6px 0 5px; }
.s { display: flex; align-items: center; height: 20px; border-left: 1px solid #ccc; padding: 0 16px; }
.s i, .pct i { border: 6px solid transparent; border-top: 9px solid #555; border-bottom: 0; margin-left: 10px; }
button.s { padding: 0 15px 0 14px; }
.zoom { display: flex; align-items: center; margin-left: auto; }
.zoom button { width: 48px; height: 40px; }
.zoom .pct { width: 80px; }
.zoom .one { position: relative; width: 22px; height: 22px; border: 2px solid #444; border-radius: 50%; color: #3f7fd0; margin-right: 14px; }
.one svg { position: absolute; right: -4px; bottom: -4px; width: 6px; height: 6px; }
```
